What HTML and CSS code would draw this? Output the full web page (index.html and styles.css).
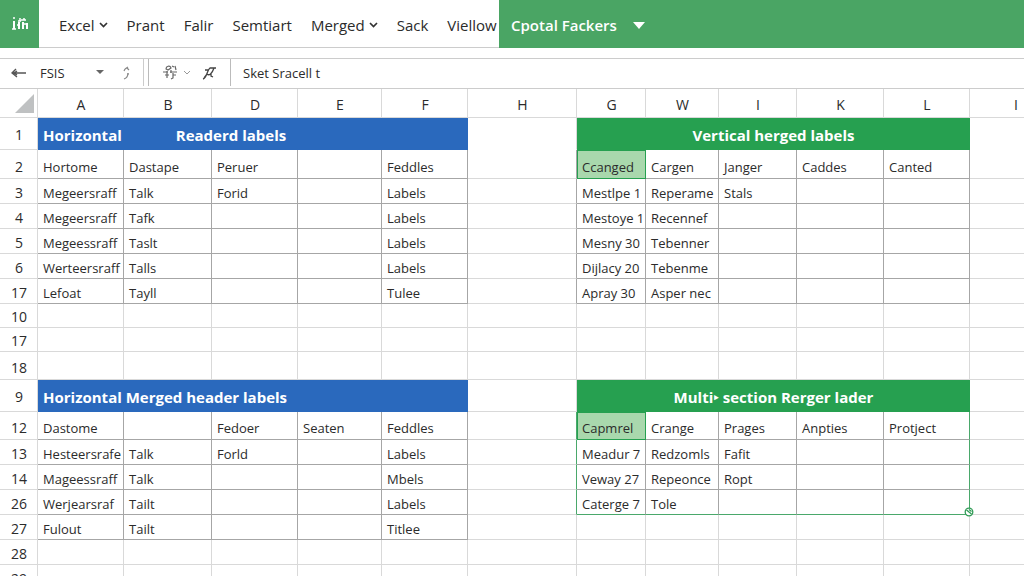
FILE: index.html
```html
<!DOCTYPE html>
<html lang="en">
<head>
  <meta charset="UTF-8">
  <title>Merged Labels</title>
  <link rel="stylesheet" href="styles.css">
</head>
<body>
  <header class="menu-bar">
    <button class="app-logo" aria-label="Home">
      <svg width="18" height="18" viewBox="0 0 18 18" fill="none" stroke="#fff">
        <path d="M3 6v8M8 7v7M12 7v7M16 8v6" stroke-width="2" />
        <path d="M3 2v2M9 3v3M13 3v2M7 6h3M11 9h5M1 14h4M6 10h3M10 5h5" stroke-width="1.500" />
      </svg>
    </button>
    <nav class="menu">
      <button class="menu-button">Excel
        <svg width="9" height="6" viewBox="0 0 9 6" fill="none" stroke="#333" stroke-width="1.700"><path d="M1 1l3.500 3.500L8 1" /></svg>
      </button>
      <button class="menu-button">Prant</button>
      <button class="menu-button">Falir</button>
      <button class="menu-button">Semtiart</button>
      <button class="menu-button">Merged
        <svg width="9" height="6" viewBox="0 0 9 6" fill="none" stroke="#333" stroke-width="1.700"><path d="M1 1l3.500 3.500L8 1" /></svg>
      </button>
      <button class="menu-button">Sack</button>
      <button class="menu-button">Viellow</button>
    </nav>
    <div class="menu-tab">
      <button class="tab-button">Cpotal Fackers
        <svg width="12" height="7" viewBox="0 0 12 7" fill="#fff"><path d="M0 0h12L6 7z" /></svg>
      </button>
    </div>
  </header>

  <div class="formula-bar">
    <div class="name-box">
      <button class="icon-button" aria-label="Back">
        <svg width="16" height="12" viewBox="0 0 16 12" fill="none" stroke="#555" stroke-width="1.400"><path d="M15 6H1M5 2L1 6l5 4M3 6l3-2M3 6l3 2" /></svg>
      </button>
      <input class="name-input" type="text" value="FSIS" aria-label="Cell name">
      <button class="icon-button" aria-label="Show names">
        <svg width="8" height="5" viewBox="0 0 8 5" fill="#666"><path d="M0 0h8L4 4z" /></svg>
      </button>
      <button class="icon-button more" aria-label="More">
        <svg width="8" height="14" viewBox="0 0 8 14" fill="none" stroke="#888" stroke-width="1.200"><path d="M2 3l3-2M4 2l2 2M1 5l1-2M1 13c3-1 4-3 4-6M4 8h2" /></svg>
      </button>
    </div>
    <div class="formula-tools">
      <button class="icon-button" aria-label="Format">
        <svg width="15" height="15" viewBox="0 0 15 15" fill="none" stroke="#666" stroke-width="1.200"><path d="M3 4c0-3 4-4 5-1L5 5zM9 1l2 1M12 1l1 4M0 7h5M7 7h7M4 6v7M2 10h4M8 5v3M10 8v5l-2 1M10 10h3" /></svg>
      </button>
      <button class="icon-button" aria-label="Format options">
        <svg width="6" height="4" viewBox="0 0 6 4" fill="none" stroke="#999"><path d="M0 0l3 3 3-3" /></svg>
      </button>
      <button class="icon-button function" aria-label="Insert function">
        <svg width="15" height="14" viewBox="0 0 15 14" fill="none" stroke="#444" stroke-width="1.300"><path d="M1 13c4-1 4-9 7-11h6M3 4h3M2 12l3-4c2 2 5 0 7-6M9 7v3l2 1" /></svg>
      </button>
    </div>
    <input class="formula-input" type="text" value="Sket Sracell t" aria-label="Formula">
  </div>

  <main class="sheet">
    <table class="grid">
      <colgroup>
        <col class="col-num"><col class="col-a"><col class="col-b"><col class="col-d"><col class="col-e"><col class="col-f">
        <col class="col-h">
        <col class="col-g"><col class="col-w"><col class="col-i"><col class="col-k"><col class="col-l"><col class="col-last">
      </colgroup>
      <thead>
        <tr>
          <th class="corner"><svg width="19" height="19" viewBox="0 0 19 19" fill="#bfc1c2"><path d="M19 0v19H0z" /></svg></th>
          <th>A</th><th>B</th><th>D</th><th>E</th><th>F</th><th>H</th><th>G</th><th>W</th><th>I</th><th>K</th><th>L</th><th>I</th>
        </tr>
      </thead>
      <tbody>
        <tr class="title-row">
          <th>1</th>
          <td class="title blue" colspan="5"><div class="title-parts"><span>Horizontal</span><span>Readerd labels</span></div></td>
          <td class="open"></td>
          <td class="title green" colspan="5">Vertical herged labels</td>
          <td class="open"></td>
        </tr>
        <tr class="tall-row data">
          <th>2</th><td>Hortome</td><td>Dastape</td><td>Peruer</td><td></td><td>Feddles</td><td></td>
          <td class="selected">Ccanged</td><td>Cargen</td><td>Janger</td><td>Caddes</td><td>Canted</td><td></td>
        </tr>
        <tr class="data">
          <th>3</th><td>Megeersraff</td><td>Talk</td><td>Forid</td><td></td><td>Labels</td><td></td>
          <td>Mestlpe 1</td><td>Reperame</td><td>Stals</td><td></td><td></td><td></td>
        </tr>
        <tr class="data">
          <th>4</th><td>Megeersraff</td><td>Tafk</td><td></td><td></td><td>Labels</td><td></td>
          <td>Mestoye 1</td><td>Recennef</td><td></td><td></td><td></td><td></td>
        </tr>
        <tr class="data">
          <th>5</th><td>Megeessraff</td><td>Taslt</td><td></td><td></td><td>Labels</td><td></td>
          <td>Mesny 30</td><td>Tebenner</td><td></td><td></td><td></td><td></td>
        </tr>
        <tr class="data">
          <th>6</th><td>Werteersraff</td><td>Talls</td><td></td><td></td><td>Labels</td><td></td>
          <td>Dijlacy 20</td><td>Tebenme</td><td></td><td></td><td></td><td></td>
        </tr>
        <tr class="data">
          <th>17</th><td>Lefoat</td><td>Tayll</td><td></td><td></td><td>Tulee</td><td></td>
          <td>Apray 30</td><td>Asper nec</td><td></td><td></td><td></td><td></td>
        </tr>
        <tr class="short-row">
          <th>10</th><td></td><td></td><td></td><td></td><td></td><td></td><td></td><td></td><td></td><td></td><td></td><td></td>
        </tr>
        <tr class="short-row">
          <th>17</th><td></td><td></td><td></td><td></td><td></td><td></td><td></td><td></td><td></td><td></td><td></td><td></td>
        </tr>
        <tr class="label-row">
          <th>18</th><td></td><td></td><td></td><td></td><td></td><td></td><td></td><td></td><td></td><td></td><td></td><td></td>
        </tr>
        <tr class="title-row">
          <th>9</th>
          <td class="title blue" colspan="5">Horizontal Merged header labels</td>
          <td></td>
          <td class="title green" colspan="5">Multi‣ section Rerger lader</td>
          <td></td>
        </tr>
        <tr class="label-row data range">
          <th>12</th><td>Dastome</td><td></td><td>Fedoer</td><td>Seaten</td><td>Feddles</td><td></td>
          <td class="selected">Capmrel</td><td>Crange</td><td>Prages</td><td>Anpties</td><td>Protject</td><td></td>
        </tr>
        <tr class="data range">
          <th>13</th><td>Hesteersrafe</td><td>Talk</td><td>Forld</td><td></td><td>Labels</td><td></td>
          <td>Meadur 7</td><td>Redzomls</td><td>Fafit</td><td></td><td></td><td></td>
        </tr>
        <tr class="data range">
          <th>14</th><td>Mageessraff</td><td>Talk</td><td></td><td></td><td>Mbels</td><td></td>
          <td>Veway 27</td><td>Repeonce</td><td>Ropt</td><td></td><td></td><td></td>
        </tr>
        <tr class="data range range-end">
          <th>26</th><td>Werjearsraf</td><td>Tailt</td><td></td><td></td><td>Labels</td><td></td>
          <td>Caterge 7</td><td>Tole</td><td></td><td></td>
          <td class="range-corner"><svg class="fill-handle" width="10" height="10" viewBox="0 0 10 10" fill="#fff" stroke="#2f9b55" stroke-width="1.300"><circle cx="5" cy="5" r="3.800" /><path d="M2.500 3l5 4M5 2.500l2.500 2" /></svg></td>
          <td></td>
        </tr>
        <tr class="data left-only">
          <th>27</th><td>Fulout</td><td>Tailt</td><td></td><td></td><td>Titlee</td><td></td><td></td><td></td><td></td><td></td><td></td><td></td>
        </tr>
        <tr>
          <th>28</th><td></td><td></td><td></td><td></td><td></td><td></td><td></td><td></td><td></td><td></td><td></td><td></td>
        </tr>
        <tr>
          <th>29</th><td></td><td></td><td></td><td></td><td></td><td></td><td></td><td></td><td></td><td></td><td></td><td></td>
        </tr>
      </tbody>
    </table>
  </main>
</body>
</html>
```

FILE: styles.css
```css
* {
  box-sizing: border-box;
}

body {
  margin: 0;
  height: 100vh;
  display: flex;
  flex-direction: column;
  overflow: hidden;
  background-color: #fff;
  color: #2b2b2b;
  font-family: "Open Sans", "Noto Sans", sans-serif;
  font-size: 13px;
}

button,
input {
  font-family: inherit;
  color: inherit;
  border: none;
  background: none;
  padding: 0;
}

button {
  cursor: pointer;
}

/* Menu Bar */
.menu-bar {
  display: flex;
  flex: none;
  height: 48px;
}

.app-logo {
  flex: none;
  width: 39px;
  display: flex;
  align-items: center;
  justify-content: center;
  background-color: #4aa564;
}

.menu {
  flex: 0 0 460px;
  display: flex;
  align-items: center;
  gap: 19px;
  padding: 2px 0 0 20px;
  border-bottom: 1px solid #ccc;
  overflow: hidden;
}

.menu-button {
  flex: none;
  display: flex;
  align-items: center;
  gap: 4px;
  font-size: 15px;
}

.menu-tab {
  flex: 1;
  display: flex;
  align-items: center;
  padding: 2px 12px 0;
  background-color: #4aa564;
}

.tab-button {
  display: flex;
  align-items: center;
  gap: 16px;
  color: #fff;
  font-size: 15px;
  font-weight: 600;
}

/* Formula Bar */
.formula-bar {
  flex: none;
  display: flex;
  height: 31px;
  margin-top: 10px;
  padding-bottom: 2px;
  border-top: 1px solid #ccc;
  border-bottom: 1px solid #ccc;
}

.name-box {
  display: flex;
  align-items: center;
  width: 144px;
  padding-left: 11px;
  border-right: 1px solid #ccc;
}

.icon-button {
  display: flex;
  align-items: center;
}

.name-input {
  width: 56px;
  margin-left: 13px;
  font-size: 13px;
}

.more {
  margin-left: 19px;
}

.formula-tools {
  display: flex;
  align-items: center;
  gap: 6px;
  width: 83px;
  margin-left: 4px;
  padding-left: 14px;
  border-left: 1px solid #bbb;
  border-right: 1px solid #bbb;
}

.function {
  margin-left: 6px;
}

.formula-input {
  flex: 1;
  padding-left: 12px;
  font-size: 13px;
}

/* Sheet */
.sheet {
  flex: 1;
  min-height: 0;
  overflow: hidden;
}

.grid {
  width: 1062px;
  table-layout: fixed;
  border-collapse: separate;
  border-spacing: 0;
}

.col-num { width: 38px; }
.col-a { width: 86px; }
.col-b { width: 88px; }
.col-d { width: 86px; }
.col-e { width: 84px; }
.col-f { width: 86px; }
.col-h { width: 109px; }
.col-g { width: 69px; }
.col-w { width: 73px; }
.col-i { width: 78px; }
.col-k { width: 87px; }
.col-l { width: 86px; }
.col-last { width: 92px; }

.grid th,
.grid td {
  height: 25px;
  padding: 3px 0 0 5px;
  border-right: 1px solid #d9d9d9;
  border-bottom: 1px solid #d9d9d9;
  line-height: 20px;
  white-space: nowrap;
}

.grid th {
  padding: 3px 0 0 1px;
  font-size: 14px;
  font-weight: 400;
  text-align: center;
}

.grid thead th {
  height: 29px;
}

.grid thead .corner {
  padding: 0 3px 0 0;
  line-height: 0;
  text-align: right;
}

.grid .short-row th,
.grid .short-row td {
  height: 24px;
}

.grid .label-row th,
.grid .label-row td {
  height: 28px;
  padding-top: 5px;
}

.grid .tall-row th,
.grid .tall-row td {
  height: 29px;
  padding-top: 5px;
}

.grid .title-row th,
.grid .title-row td {
  height: 32px;
}

.grid .open {
  border-bottom-color: transparent;
}

/* Merged Titles */
.grid .title {
  padding-top: 2px;
  border: none;
  color: #fff;
  font-size: 15px;
  font-weight: 700;
}

.grid .blue {
  background-color: #2a69bd;
}

.grid .green {
  padding-left: 0;
  background-color: #26a050;
  text-align: center;
}

.title-parts {
  display: flex;
  gap: 54px;
}

/* Filled Ranges */
.grid .data td {
  border-color: #a6a6a6;
}

.grid .data td:nth-child(7),
.grid .data td:nth-child(13) {
  border-bottom-color: #d9d9d9;
}

.grid .left-only td:nth-child(n+7) {
  border-color: #d9d9d9;
}

.grid .range td:nth-child(7),
.grid .range td:nth-child(12) {
  border-right-color: #4aa86b;
}

.grid .range-end td:nth-child(n+8):nth-child(-n+12) {
  border-bottom-color: #4aa86b;
}

.grid .data td.selected {
  background-color: #a9d8ad;
  border-color: #26a050;
  box-shadow: inset 1px 1px #26a050;
}

.grid .range-corner {
  position: relative;
}

.fill-handle {
  position: absolute;
  right: -5px;
  bottom: -3px;
  z-index: 1;
}
```
